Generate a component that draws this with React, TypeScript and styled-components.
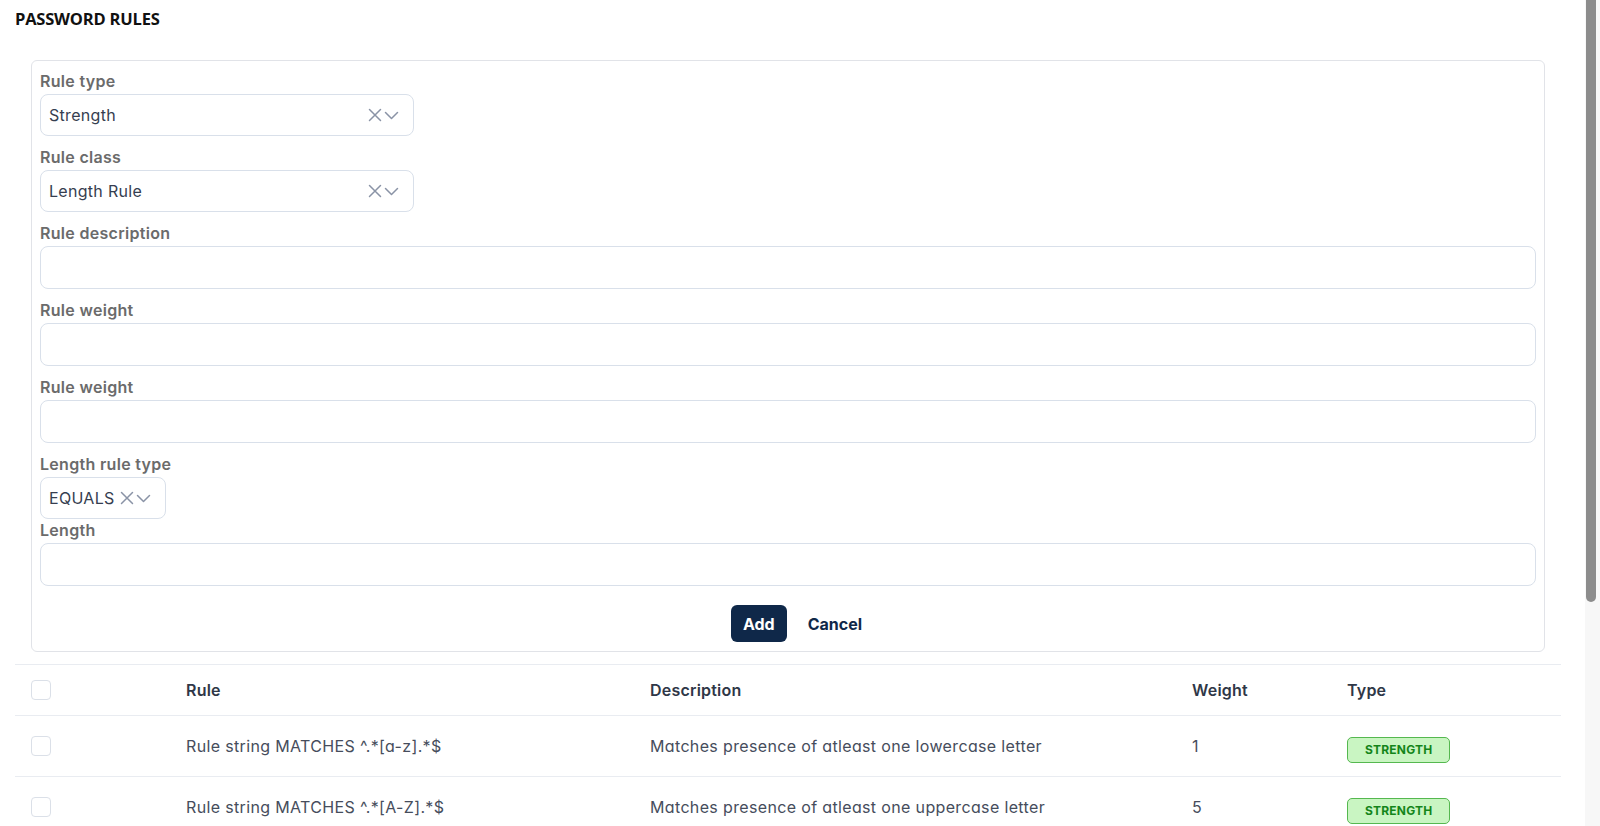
import React from 'react';
import styled, { createGlobalStyle } from 'styled-components';

const GlobalStyle = createGlobalStyle`
  html, body {
    margin: 0;
    padding: 0;
    height: 100%;
    overflow: hidden;
    background: #ffffff;
  }

  body {
    font-family: Inter, "Noto Sans", Arial, sans-serif;
    color: #3f4656;
  }
`;

interface RuleRow {
  rule: string;
  description: string;
  weight: number;
  type: string;
}

const rules: RuleRow[] = [
  { rule: 'Rule string MATCHES ^.*[a-z].*$', description: 'Matches presence of atleast one lowercase letter', weight: 1, type: 'Strength' },
  { rule: 'Rule string MATCHES ^.*[A-Z].*$', description: 'Matches presence of atleast one uppercase letter', weight: 5, type: 'Strength' },
  { rule: 'Rule string MATCHES ^.*[0-9].*$', description: 'Matches presence of atleast one digit', weight: 5, type: 'Strength' },
  { rule: 'Rule string MATCHES ^.*[^a-zA-Z0-9].*$', description: 'Matches presence of atleast one special character', weight: 10, type: 'Strength' },
  { rule: 'Length GREATER_THAN 8', description: 'Password must be longer than 8 characters', weight: 10, type: 'Strength' },
];

const Viewport = styled.div`
  height: 100vh;
  overflow-y: auto;
  scrollbar-width: none;
`;

// page scrollbar, drawn over the right edge
const ScrollRail = styled.div`
  position: fixed;
  top: 0;
  right: 0;
  bottom: 0;
  width: 15px;
  background: #f7f7f7;
`;

const ScrollThumb = styled.div`
  margin-left: 1px;
  width: 10px;
  height: 602px;
  border-radius: 0 0 5px 5px;
  background: #8c8c8c;
`;

const Page = styled.div`
  padding: 9px 39px 24px 15px;
`;

const Title = styled.h1`
  margin: 0 0 31px;
  font-family: "Open Sans", "Liberation Sans", sans-serif;
  font-size: 16.5px;
  line-height: 20px;
  font-weight: 700;
  color: #111111;
  letter-spacing: -0.2px;
`;

const FormCard = styled.div`
  margin: 0 16px;
  padding: 9px 8px 9px;
  border: 1px solid #e1e3e8;
  border-radius: 6px;
`;

const Field = styled.div<{ $tight?: boolean }>`
  display: flex;
  flex-direction: column;
  align-items: flex-start;
  gap: 2px;
  margin-bottom: ${p => (p.$tight ? '0' : '10px')};
`;

const Label = styled.label`
  font-size: 16px;
  line-height: 22px;
  font-weight: 600;
  color: #6b6b6b;
  letter-spacing: 0.3px;
`;

const SelectBox = styled.div<{ $width?: number }>`
  box-sizing: border-box;
  display: flex;
  align-items: center;
  gap: 5px;
  height: 42px;
  width: ${p => (p.$width ? `${p.$width}px` : 'auto')};
  padding: 0 14px 0 8px;
  border: 1px solid #d9e0ea;
  border-radius: 8px;
  background: #ffffff;
`;

const SelectValue = styled.span`
  flex: 1;
  font-size: 16px;
  color: #363e50;
  letter-spacing: 0.3px;
  white-space: nowrap;
`;

const Icons = styled.span`
  display: flex;
  align-items: center;
  gap: 2px;
  color: #8a93a6;
`;

const TextInput = styled.input`
  box-sizing: border-box;
  width: 100%;
  height: 43px;
  padding: 0 8px;
  border: 1px solid #d9e0ea;
  border-radius: 8px;
  font: inherit;
  font-size: 16px;
  color: #363e50;
  outline: none;
`;

const Actions = styled.div`
  display: flex;
  justify-content: center;
  align-items: center;
  gap: 21px;
  margin-top: 19px;
  padding-left: 17px;
`;

const PrimaryButton = styled.button`
  height: 37px;
  padding: 0 12px;
  border: none;
  border-radius: 6px;
  background: #0f2849;
  color: #ffffff;
  font-family: Inter, sans-serif;
  font-size: 16px;
  font-weight: 700;
  cursor: pointer;
`;

const TextButton = styled.button`
  padding: 0;
  border: none;
  background: none;
  color: #0f2849;
  font-family: Inter, sans-serif;
  font-size: 16px;
  font-weight: 700;
  cursor: pointer;
`;

const Table = styled.table`
  width: 100%;
  margin-top: 12px;
  border-collapse: collapse;
  table-layout: fixed;
  font-feature-settings: "cv11";
`;

const HeadCell = styled.th`
  height: 50px;
  padding: 0;
  text-align: left;
  font-size: 16px;
  font-weight: 600;
  color: #2f3747;
  letter-spacing: 0.2px;
  border-top: 1px solid #e9ecf1;
  border-bottom: 1px solid #e9ecf1;
  vertical-align: middle;
`;

const Cell = styled.td`
  height: 60px;
  padding: 0;
  font-size: 16px;
  color: #464d5c;
  letter-spacing: 0.35px;
  border-bottom: 1px solid #e9ecf1;
  vertical-align: middle;
`;

const CheckCell = styled.div`
  padding-left: 16px;
  display: flex;
  align-items: center;
`;

const Checkbox = styled.span`
  box-sizing: border-box;
  display: inline-block;
  width: 20px;
  height: 20px;
  border: 1.5px solid #dbe0e8;
  border-radius: 4px;
  background: #ffffff;
`;

const Badge = styled.span`
  display: inline-flex;
  align-items: center;
  justify-content: center;
  box-sizing: border-box;
  height: 26px;
  padding: 0 17px;
  margin-top: 7px;
  border: 1px solid #55b84f;
  border-radius: 5px;
  background: #c9f5c2;
  color: #14851a;
  font-size: 12px;
  font-weight: 700;
  text-transform: uppercase;
  letter-spacing: 0.2px;
`;

const ClearIcon = () => (
  <svg width="14" height="14" viewBox="0 0 14 14" fill="none" stroke="currentColor" strokeWidth="1.5" strokeLinecap="round">
    <path d="M1.5 1.5l11 11M12.5 1.5l-11 11" />
  </svg>
);

const ChevronIcon = () => (
  <svg width="15" height="9" viewBox="0 0 15 9" fill="none" stroke="currentColor" strokeWidth="1.5" strokeLinecap="round" strokeLinejoin="round">
    <path d="M1.5 1.5l6 6 6-6" />
  </svg>
);

const Select: React.FC<{ value: string; width?: number }> = ({ value, width }) => (
  <SelectBox $width={width}>
    <SelectValue>{value}</SelectValue>
    <Icons>
      <ClearIcon />
      <ChevronIcon />
    </Icons>
  </SelectBox>
);

const App: React.FC = () => {
  return (
    <>
      <GlobalStyle />
      <Viewport>
        <Page>
          <Title>PASSWORD RULES</Title>

          <FormCard>
            <Field>
              <Label>Rule type</Label>
              <Select value="Strength" width={374} />
            </Field>
            <Field>
              <Label>Rule class</Label>
              <Select value="Length Rule" width={374} />
            </Field>
            <Field>
              <Label>Rule description</Label>
              <TextInput />
            </Field>
            <Field>
              <Label>Rule weight</Label>
              <TextInput />
            </Field>
            <Field>
              <Label>Rule weight</Label>
              <TextInput />
            </Field>
            <Field $tight>
              <Label>Length rule type</Label>
              <Select value="EQUALS" />
            </Field>
            <Field $tight>
              <Label>Length</Label>
              <TextInput />
            </Field>
            <Actions>
              <PrimaryButton>Add</PrimaryButton>
              <TextButton>Cancel</TextButton>
            </Actions>
          </FormCard>

          <Table>
            <colgroup>
              <col style={{ width: 171 }} />
              <col style={{ width: 464 }} />
              <col style={{ width: 542 }} />
              <col style={{ width: 155 }} />
              <col />
            </colgroup>
            <thead>
              <tr>
                <HeadCell>
                  <CheckCell>
                    <Checkbox />
                  </CheckCell>
                </HeadCell>
                <HeadCell>Rule</HeadCell>
                <HeadCell>Description</HeadCell>
                <HeadCell>Weight</HeadCell>
                <HeadCell>Type</HeadCell>
              </tr>
            </thead>
            <tbody>
              {rules.map(r => (
                <tr key={r.rule}>
                  <Cell>
                    <CheckCell>
                      <Checkbox />
                    </CheckCell>
                  </Cell>
                  <Cell>{r.rule}</Cell>
                  <Cell>{r.description}</Cell>
                  <Cell>{r.weight}</Cell>
                  <Cell>
                    <Badge>{r.type}</Badge>
                  </Cell>
                </tr>
              ))}
            </tbody>
          </Table>
        </Page>
      </Viewport>
      <ScrollRail>
        <ScrollThumb />
      </ScrollRail>
    </>
  );
};

export default App;
